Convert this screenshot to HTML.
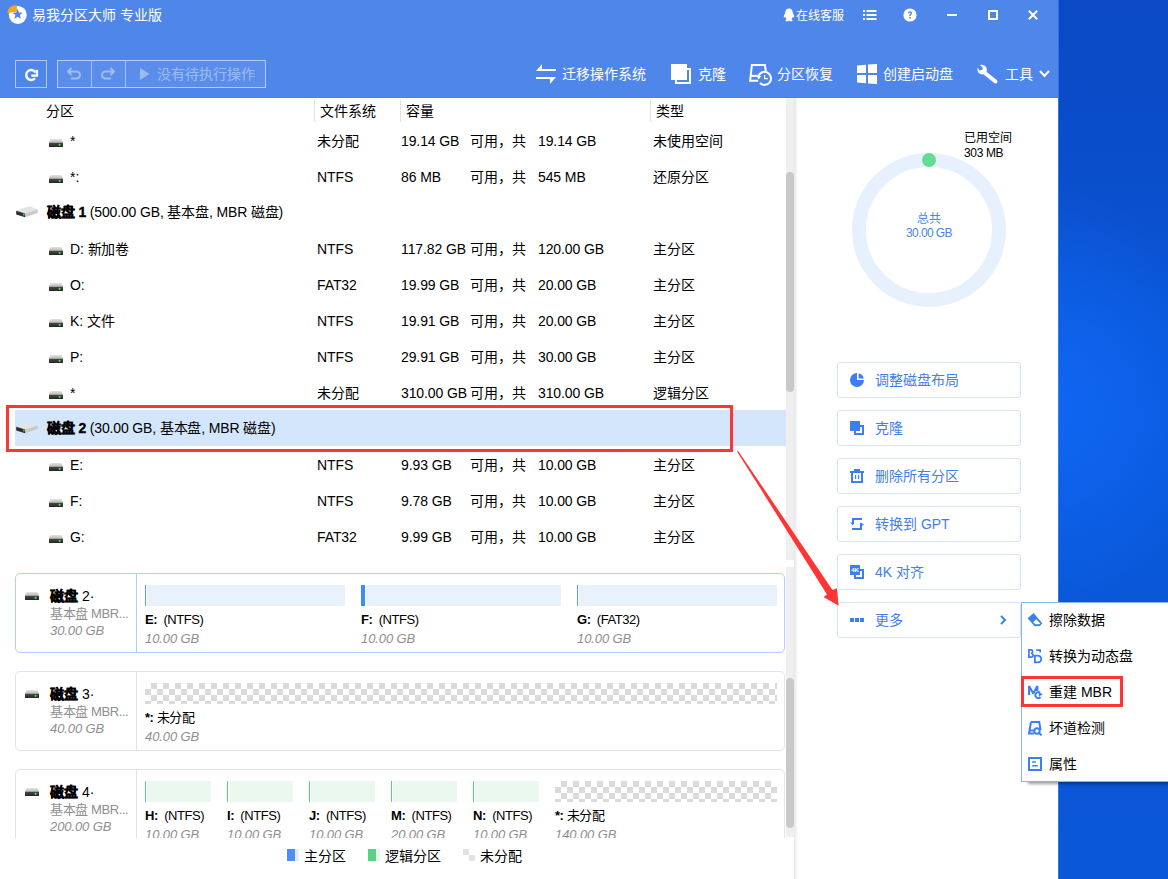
<!DOCTYPE html>
<html lang="zh-CN"><head><meta charset="utf-8">
<style>
*{box-sizing:border-box}
html,body{margin:0;padding:0}
body{width:1168px;height:879px;overflow:hidden;position:relative;font-family:"Liberation Sans",sans-serif;background:#fff}
.a{position:absolute}
.t{position:absolute;white-space:nowrap;line-height:20px;font-size:14px;color:#000}
.w{color:#fff}
svg{position:absolute;overflow:visible}
#desk{left:1058px;top:0;width:110px;height:879px;background:radial-gradient(ellipse 140px 220px at 0 400px,rgba(20,110,255,.55),rgba(20,110,255,0)),linear-gradient(180deg,#0a49c3 0px,#0a4fcd 200px,#0a59dc 330px,#0a5de2 420px,#0a59dc 520px,#0a55d5 650px,#0a57d8 879px)}
#hdr{left:0;top:0;width:1058px;height:98px;background:#4f86ea}
.tb{position:absolute;top:60px;height:28px;border:1px solid rgba(255,255,255,.55)}
.row{position:absolute;left:0;width:786px;height:36px}
.hd{position:absolute;width:14px;height:8px}
.btn{position:absolute;left:837px;width:184px;height:36px;border:1px solid #d3e2fa;border-radius:3px;background:#fff}
.bt{position:absolute;left:37px;top:7px;line-height:20px;font-size:14px;color:#3f80ea;white-space:nowrap}
.card{position:absolute;left:15px;width:770px;height:80px;border:1px solid #dfe5ec;border-radius:5px;background:#fff}
.bar{position:absolute;height:21px}
.pb{background:linear-gradient(90deg,#5b9bff 0,#5b9bff 1px,#fff 1px,#fff 2px,#e8f2fd 2px)}
.lb{background:linear-gradient(90deg,#58cf85 0,#58cf85 1px,#fff 1px,#fff 2px,#eaf8ef 2px)}
.ub{background-color:#fff;background-image:linear-gradient(45deg,#dadada 25%,transparent 25%,transparent 75%,#dadada 75%),linear-gradient(45deg,#dadada 25%,transparent 25%,transparent 75%,#dadada 75%);background-size:12px 12px;background-position:0 0,6px 6px}
.bb{-webkit-text-stroke:0.35px #000}
.pl{position:absolute;font-size:13px;line-height:18px;color:#000;white-space:nowrap}
.pl b{font-weight:bold}
.ps{position:absolute;font-size:13px;line-height:18px;color:#999;font-style:italic;white-space:nowrap}
</style></head><body>
<div id="desk" class="a"></div>
<div class="a" style="left:1058px;top:0;width:1px;height:879px;background:rgba(60,150,230,.6)"></div>

<!-- HEADER -->
<div id="hdr" class="a">
  <div class="a" style="left:0;top:97px;width:1058px;height:1px;background:#4880e6"></div>
  <!-- logo -->
  <svg style="left:0;top:0" width="32" height="30" viewBox="0 0 32 30">
    <circle cx="17.8" cy="14.9" r="9" fill="#fff"/>
    <path d="M7.3 13.1 A9.6 8.6 0 0 1 16.9 4.9 L16.9 11.6 L13.2 12.2 Z" fill="#f8a816"/>
    <path d="M17.6 8.8 L18.95 12.54 L22.9 12.7 L19.79 15.11 L20.9 18.9 L17.6 16.7 L14.3 18.9 L15.41 15.11 L12.3 12.7 L16.25 12.54 Z" fill="#4f86ea"/>
  </svg>
  <div class="t w" style="left:32px;top:5px;font-size:14px">易我分区大师 专业版</div>

  <!-- QQ icon -->
  <svg style="left:783px;top:8px" width="12" height="14" viewBox="0 0 12 14">
    <path d="M6 0.5 C3.3 0.5 2.2 2.6 2.2 5 C1.4 6.2 0.6 7.9 0.9 9.4 C1.2 10 1.8 9.4 2.2 8.8 C2.4 9.8 3 10.6 3.6 11.2 C2.6 11.6 2.2 12.3 2.6 12.9 C3.3 13.6 5 13.3 6 12.7 C7 13.3 8.7 13.6 9.4 12.9 C9.8 12.3 9.4 11.6 8.4 11.2 C9 10.6 9.6 9.8 9.8 8.8 C10.2 9.4 10.8 10 11.1 9.4 C11.4 7.9 10.6 6.2 9.8 5 C9.8 2.6 8.7 0.5 6 0.5 Z" fill="#fff"/>
  </svg>
  <div class="t w" style="left:796px;top:6px;font-size:12px">在线客服</div>
  <!-- list icon -->
  <svg style="left:863px;top:9px" width="14" height="12" viewBox="0 0 14 12">
    <rect x="0" y="1" width="2" height="2" fill="#fff"/><rect x="3.5" y="1" width="10" height="2" fill="#fff"/>
    <rect x="0" y="5" width="2" height="2" fill="#fff"/><rect x="3.5" y="5" width="10" height="2" fill="#fff"/>
    <rect x="0" y="9" width="2" height="2" fill="#fff"/><rect x="3.5" y="9" width="10" height="2" fill="#fff"/>
  </svg>
  <!-- help -->
  <svg style="left:903px;top:8px" width="14" height="14" viewBox="0 0 14 14">
    <circle cx="7" cy="7" r="6.6" fill="#fff"/>
    <path d="M4.9 5.2 C4.9 3.9 5.9 3.2 7 3.2 C8.2 3.2 9.1 3.9 9.1 5 C9.1 6.3 7.7 6.5 7.7 7.7 L7.7 8.1 L6.3 8.1 L6.3 7.5 C6.3 6 7.7 5.9 7.7 5 C7.7 4.6 7.4 4.4 7 4.4 C6.5 4.4 6.2 4.7 6.2 5.2 Z" fill="#4f86ea"/>
    <rect x="6.2" y="9" width="1.6" height="1.6" fill="#4f86ea"/>
  </svg>
  <!-- min max close -->
  <div class="a" style="left:947px;top:14px;width:10px;height:2px;background:#fff"></div>
  <div class="a" style="left:988px;top:10px;width:10px;height:10px;border:2px solid #fff"></div>
  <svg style="left:1028px;top:10px" width="10" height="10" viewBox="0 0 10 10">
    <path d="M0.8 0.8 L9.2 9.2 M9.2 0.8 L0.8 9.2" stroke="#fff" stroke-width="2"/>
  </svg>

  <!-- toolbar left -->
  <div class="tb" style="left:15px;width:32px"></div>
  <svg style="left:0;top:0" width="60" height="98" viewBox="0 0 60 98">
    <path d="M35.03 78.21 A5 5 0 1 1 35.6 72.6" stroke="#fff" stroke-width="2.3" fill="none"/>
    <path d="M37 69.8 L37 75.6 L31.3 75.6" stroke="#fff" stroke-width="2.2" fill="none"/>
  </svg>
  <div class="tb" style="left:57px;width:209px;background:rgba(255,255,255,.07)"></div>
  <div class="a" style="left:91px;top:61px;width:1px;height:26px;background:rgba(255,255,255,.45)"></div>
  <div class="a" style="left:125px;top:61px;width:1px;height:26px;background:rgba(255,255,255,.45)"></div>
  <svg style="left:66px;top:65.5px" width="16" height="14" viewBox="0 0 16 14">
    <path d="M3.5 5.5 L10.5 5.5 A3.5 3.5 0 0 1 10.5 12.5 L5 12.5" stroke="rgba(255,255,255,.42)" stroke-width="1.9" fill="none"/>
    <path d="M5.5 2 L2 5.5 L5.5 9" stroke="rgba(255,255,255,.42)" stroke-width="1.9" fill="none"/>
  </svg>
  <svg style="left:100px;top:65.5px" width="16" height="14" viewBox="0 0 16 14">
    <path d="M12.5 5.5 L5.5 5.5 A3.5 3.5 0 0 0 5.5 12.5 L11 12.5" stroke="rgba(255,255,255,.42)" stroke-width="1.9" fill="none"/>
    <path d="M10.5 2 L14 5.5 L10.5 9" stroke="rgba(255,255,255,.42)" stroke-width="1.9" fill="none"/>
  </svg>
  <svg style="left:140px;top:68px" width="10" height="12" viewBox="0 0 10 12">
    <path d="M0 0 L9.5 6 L0 12 Z" fill="rgba(255,255,255,.4)"/>
  </svg>
  <div class="t" style="left:157px;top:64px;color:rgba(255,255,255,.42)">没有待执行操作</div>

  <!-- toolbar right -->
  <svg style="left:536px;top:64px" width="20" height="20" viewBox="0 0 20 20">
    <path d="M0 7 L6 0 L6 5 L20 5 L20 7 Z" fill="#fff"/>
    <path d="M0 13 L20 13 L14 20 L14 15 L0 15 Z" fill="#fff"/>
  </svg>
  <div class="t w" style="left:562px;top:64px">迁移操作系统</div>
  <svg style="left:671px;top:64px" width="21" height="21" viewBox="0 0 21 21">
    <rect x="0" y="0" width="16" height="16" fill="#fff"/>
    <rect x="5" y="5" width="14" height="14" stroke="#fff" stroke-width="2" fill="none"/>
  </svg>
  <div class="t w" style="left:698px;top:64px">克隆</div>
  <svg style="left:744px;top:60px" width="34" height="30" viewBox="0 0 34 30">
    <path d="M21.8 10.8 L20.9 5.1 L7.9 5.1 L6.1 20.8 L14.2 20.8" stroke="#fff" stroke-width="2" fill="none"/>
    <rect x="7" y="14.8" width="6.8" height="2.1" fill="#fff"/>
    <path d="M15.9 23 A6.5 6.5 0 1 0 14.2 16.7" stroke="#fff" stroke-width="2" fill="none"/>
    <path d="M12.4 16 L17.2 16 L14.8 19.4 Z" fill="#fff"/>
    <path d="M20.6 15 L20.6 18.7 L23.9 18.7" stroke="#fff" stroke-width="1.3" fill="none"/>
  </svg>
  <div class="t w" style="left:777px;top:64px">分区恢复</div>
  <svg style="left:857px;top:64px" width="20" height="20" viewBox="0 0 20 20">
    <path d="M0 1.5 L9 0.8 L9 9 L0 9 Z" fill="#fff"/>
    <path d="M11 0.6 L20 0 L20 9 L11 9 Z" fill="#fff"/>
    <path d="M0 11 L9 11 L9 19.2 L0 18.5 Z" fill="#fff"/>
    <path d="M11 11 L20 11 L20 20 L11 19.4 Z" fill="#fff"/>
  </svg>
  <div class="t w" style="left:883px;top:64px">创建启动盘</div>
  <svg style="left:977px;top:64px" width="22" height="20" viewBox="0 0 22 20">
    <path d="M8.5 9.5 L18.5 17.5" stroke="#fff" stroke-width="4" stroke-linecap="round"/>
    <path d="M3 1 L6 4 L5 6 L2.5 6.5 L0.5 3.5 C0 6 0.8 9 3.5 10 C5.5 10.8 7.5 10.3 9 9 C10 7.5 10.3 5 9 3 C7.8 1.2 5.5 0.5 3 1 Z" fill="#fff"/>
  </svg>
  <div class="t w" style="left:1005px;top:64px">工具</div>
  <svg style="left:1039px;top:70px" width="11" height="8" viewBox="0 0 11 8">
    <path d="M1 1 L5.5 6 L10 1" stroke="#fff" stroke-width="2" fill="none"/>
  </svg>
</div>

<svg width="0" height="0" style="position:absolute;left:0;top:0">
<defs>
<linearGradient id="gtop" x1="0" y1="0" x2="0" y2="1"><stop offset="0" stop-color="#e4e4e4"/><stop offset="1" stop-color="#b9b9b9"/></linearGradient>
<linearGradient id="gfront" x1="0" y1="0" x2="0" y2="1"><stop offset="0" stop-color="#4a4a4a"/><stop offset="1" stop-color="#262626"/></linearGradient>
<symbol id="hdd" viewBox="0 0 14 8">
<path d="M1.6 0 L12.4 0 L14 3.6 L0 3.6 Z" fill="url(#gtop)"/>
<rect x="0" y="3.6" width="14" height="4.4" fill="url(#gfront)"/>
<circle cx="10.6" cy="5.8" r="1.1" fill="#3fe04a"/>
</symbol>
<symbol id="disk" viewBox="0 0 23 12">
<path d="M0.2 4.8 L13.6 0.1 L21.8 3.5 L9.1 7.5 Z" fill="#e3e3e3"/>
<path d="M9.1 7.5 L21.8 3.5 L21.6 7 L9.1 11.3 Z" fill="#c9c9c9"/>
<path d="M0.2 4.8 L9.1 7.5 L9.1 11.3 L0.2 8.6 Z" fill="#2e2e2e"/>
<circle cx="7.8" cy="8.6" r="1.1" fill="#35c43f"/>
</symbol>
</defs></svg>
<!-- LEFT PANEL -->
<div class="t" style="left:46px;top:101px">分区</div>
<div class="a" style="left:314px;top:100px;width:1px;height:22px;background:#e2e2e2"></div>
<div class="t" style="left:320px;top:101px">文件系统</div>
<div class="a" style="left:400px;top:100px;width:1px;height:22px;background:#e2e2e2"></div>
<div class="t" style="left:406px;top:101px">容量</div>
<div class="a" style="left:650px;top:100px;width:1px;height:22px;background:#e2e2e2"></div>
<div class="t" style="left:656px;top:101px">类型</div>
<div class="a" style="left:15px;top:410px;width:771px;height:36px;background:#d4e6fb"></div>
<div class="a" style="left:6px;top:405px;width:727px;height:47px;border:3px solid #fd3535"></div>
<svg style="left:49px;top:139px" width="14" height="8"><use href="#hdd"/></svg>
<div class="t" style="left:70px;top:131px">*</div>
<div class="t" style="left:317px;top:131px">未分配</div>
<div class="t" style="left:401px;top:131px;letter-spacing:-0.1px">19.14 GB</div>
<div class="t" style="left:470px;top:131px">可用，共</div>
<div class="t" style="left:538px;top:131px;letter-spacing:-0.1px">19.14 GB</div>
<div class="t" style="left:653px;top:131px">未使用空间</div>
<svg style="left:49px;top:175px" width="14" height="8"><use href="#hdd"/></svg>
<div class="t" style="left:70px;top:167px">*:</div>
<div class="t" style="left:317px;top:167px;letter-spacing:-0.1px">NTFS</div>
<div class="t" style="left:401px;top:167px;letter-spacing:-0.1px">86 MB</div>
<div class="t" style="left:470px;top:167px">可用，共</div>
<div class="t" style="left:538px;top:167px;letter-spacing:-0.1px">545 MB</div>
<div class="t" style="left:653px;top:167px">还原分区</div>
<svg style="left:16px;top:206px" width="23" height="12"><use href="#disk"/></svg>
<div class="t" style="left:47px;top:202px;letter-spacing:-0.15px"><b class="bb">磁盘 1</b> (500.00 GB, 基本盘, MBR 磁盘)</div>
<svg style="left:49px;top:247px" width="14" height="8"><use href="#hdd"/></svg>
<div class="t" style="left:70px;top:239px;letter-spacing:-0.1px">D: 新加卷</div>
<div class="t" style="left:317px;top:239px;letter-spacing:-0.1px">NTFS</div>
<div class="t" style="left:401px;top:239px;letter-spacing:-0.1px">117.82 GB</div>
<div class="t" style="left:470px;top:239px">可用，共</div>
<div class="t" style="left:538px;top:239px;letter-spacing:-0.1px">120.00 GB</div>
<div class="t" style="left:653px;top:239px">主分区</div>
<svg style="left:49px;top:283px" width="14" height="8"><use href="#hdd"/></svg>
<div class="t" style="left:70px;top:275px;letter-spacing:-0.1px">O:</div>
<div class="t" style="left:317px;top:275px;letter-spacing:-0.1px">FAT32</div>
<div class="t" style="left:401px;top:275px;letter-spacing:-0.1px">19.99 GB</div>
<div class="t" style="left:470px;top:275px">可用，共</div>
<div class="t" style="left:538px;top:275px;letter-spacing:-0.1px">20.00 GB</div>
<div class="t" style="left:653px;top:275px">主分区</div>
<svg style="left:49px;top:319px" width="14" height="8"><use href="#hdd"/></svg>
<div class="t" style="left:70px;top:311px;letter-spacing:-0.1px">K: 文件</div>
<div class="t" style="left:317px;top:311px;letter-spacing:-0.1px">NTFS</div>
<div class="t" style="left:401px;top:311px;letter-spacing:-0.1px">19.91 GB</div>
<div class="t" style="left:470px;top:311px">可用，共</div>
<div class="t" style="left:538px;top:311px;letter-spacing:-0.1px">20.00 GB</div>
<div class="t" style="left:653px;top:311px">主分区</div>
<svg style="left:49px;top:355px" width="14" height="8"><use href="#hdd"/></svg>
<div class="t" style="left:70px;top:347px;letter-spacing:-0.1px">P:</div>
<div class="t" style="left:317px;top:347px;letter-spacing:-0.1px">NTFS</div>
<div class="t" style="left:401px;top:347px;letter-spacing:-0.1px">29.91 GB</div>
<div class="t" style="left:470px;top:347px">可用，共</div>
<div class="t" style="left:538px;top:347px;letter-spacing:-0.1px">30.00 GB</div>
<div class="t" style="left:653px;top:347px">主分区</div>
<svg style="left:49px;top:391px" width="14" height="8"><use href="#hdd"/></svg>
<div class="t" style="left:70px;top:383px">*</div>
<div class="t" style="left:317px;top:383px">未分配</div>
<div class="t" style="left:401px;top:383px;letter-spacing:-0.1px">310.00 GB</div>
<div class="t" style="left:470px;top:383px">可用，共</div>
<div class="t" style="left:538px;top:383px;letter-spacing:-0.1px">310.00 GB</div>
<div class="t" style="left:653px;top:383px">逻辑分区</div>
<svg style="left:16px;top:422px" width="23" height="12"><use href="#disk"/></svg>
<div class="t" style="left:47px;top:418px;letter-spacing:-0.15px"><b class="bb">磁盘 2</b> (30.00 GB, 基本盘, MBR 磁盘)</div>
<svg style="left:49px;top:463px" width="14" height="8"><use href="#hdd"/></svg>
<div class="t" style="left:70px;top:455px;letter-spacing:-0.1px">E:</div>
<div class="t" style="left:317px;top:455px;letter-spacing:-0.1px">NTFS</div>
<div class="t" style="left:401px;top:455px;letter-spacing:-0.1px">9.93 GB</div>
<div class="t" style="left:470px;top:455px">可用，共</div>
<div class="t" style="left:538px;top:455px;letter-spacing:-0.1px">10.00 GB</div>
<div class="t" style="left:653px;top:455px">主分区</div>
<svg style="left:49px;top:499px" width="14" height="8"><use href="#hdd"/></svg>
<div class="t" style="left:70px;top:491px;letter-spacing:-0.1px">F:</div>
<div class="t" style="left:317px;top:491px;letter-spacing:-0.1px">NTFS</div>
<div class="t" style="left:401px;top:491px;letter-spacing:-0.1px">9.78 GB</div>
<div class="t" style="left:470px;top:491px">可用，共</div>
<div class="t" style="left:538px;top:491px;letter-spacing:-0.1px">10.00 GB</div>
<div class="t" style="left:653px;top:491px">主分区</div>
<svg style="left:49px;top:535px" width="14" height="8"><use href="#hdd"/></svg>
<div class="t" style="left:70px;top:527px;letter-spacing:-0.1px">G:</div>
<div class="t" style="left:317px;top:527px;letter-spacing:-0.1px">FAT32</div>
<div class="t" style="left:401px;top:527px;letter-spacing:-0.1px">9.99 GB</div>
<div class="t" style="left:470px;top:527px">可用，共</div>
<div class="t" style="left:538px;top:527px;letter-spacing:-0.1px">10.00 GB</div>
<div class="t" style="left:653px;top:527px">主分区</div>
<!-- list scrollbar -->
<div class="a" style="left:786px;top:98px;width:8px;height:462px;background:#efefef"></div>
<div class="a" style="left:786px;top:172px;width:8px;height:220px;background:#c9c9c9;border-radius:4px"></div>
<div class="a" style="left:794px;top:98px;width:4px;height:781px;background:linear-gradient(90deg,#e6e6e6,#fff)"></div>

<div class="a" style="left:0;top:556px;width:786px;height:282px;overflow:hidden">
<div class="a" style="left:0;top:-556px;width:786px;height:1400px">
<div class="card" style="top:573px;border-color:#b3cdf5"></div>
<div class="a" style="left:136px;top:574px;width:1px;height:78px;background:#b3cdf5"></div>
<svg style="left:25px;top:592px" width="14" height="8"><use href="#hdd"/></svg>
<div class="t" style="left:50px;top:586px;font-size:14px"><b class="bb">磁盘</b> 2·</div>
<div class="t" style="left:50px;top:604px;font-size:13px;color:#8f8f8f;letter-spacing:-0.4px">基本盘 MBR...</div>
<div class="t" style="left:50px;top:621px;font-size:13px;color:#8f8f8f;font-style:italic;letter-spacing:-0.1px">30.00 GB</div>
<div class="bar pb" style="left:145px;top:585px;width:200px"></div>
<div class="t" style="left:145px;top:610px;font-size:13px;letter-spacing:-0.45px"><b>E:</b>&nbsp;&nbsp;(NTFS)</div>
<div class="t" style="left:145px;top:629px;font-size:13px;color:#8f8f8f;font-style:italic;letter-spacing:-0.1px">10.00 GB</div>
<div class="bar pb" style="background:linear-gradient(90deg,#3d8bff 0,#3d8bff 4px,#fff 4px,#fff 5px,#e8f2fd 5px);left:361px;top:585px;width:200px"></div>
<div class="t" style="left:361px;top:610px;font-size:13px;letter-spacing:-0.45px"><b>F:</b>&nbsp;&nbsp;(NTFS)</div>
<div class="t" style="left:361px;top:629px;font-size:13px;color:#8f8f8f;font-style:italic;letter-spacing:-0.1px">10.00 GB</div>
<div class="bar pb" style="left:577px;top:585px;width:200px"></div>
<div class="t" style="left:577px;top:610px;font-size:13px;letter-spacing:-0.45px"><b>G:</b>&nbsp;&nbsp;(FAT32)</div>
<div class="t" style="left:577px;top:629px;font-size:13px;color:#8f8f8f;font-style:italic;letter-spacing:-0.1px">10.00 GB</div>
<div class="card" style="top:671px;border-color:#dfe4eb"></div>
<div class="a" style="left:136px;top:672px;width:1px;height:78px;background:#dfe4eb"></div>
<svg style="left:25px;top:690px" width="14" height="8"><use href="#hdd"/></svg>
<div class="t" style="left:50px;top:684px;font-size:14px"><b class="bb">磁盘</b> 3·</div>
<div class="t" style="left:50px;top:702px;font-size:13px;color:#8f8f8f;letter-spacing:-0.4px">基本盘 MBR...</div>
<div class="t" style="left:50px;top:719px;font-size:13px;color:#8f8f8f;font-style:italic;letter-spacing:-0.1px">40.00 GB</div>
<div class="bar ub" style="left:145px;top:683px;width:632px"></div>
<div class="t" style="left:145px;top:708px;font-size:13px;letter-spacing:-0.45px"><b>*:</b> 未分配</div>
<div class="t" style="left:145px;top:727px;font-size:13px;color:#8f8f8f;font-style:italic;letter-spacing:-0.1px">40.00 GB</div>
<div class="card" style="top:769px;border-color:#dfe4eb"></div>
<div class="a" style="left:136px;top:770px;width:1px;height:78px;background:#dfe4eb"></div>
<svg style="left:25px;top:788px" width="14" height="8"><use href="#hdd"/></svg>
<div class="t" style="left:50px;top:782px;font-size:14px"><b class="bb">磁盘</b> 4·</div>
<div class="t" style="left:50px;top:800px;font-size:13px;color:#8f8f8f;letter-spacing:-0.4px">基本盘 MBR...</div>
<div class="t" style="left:50px;top:817px;font-size:13px;color:#8f8f8f;font-style:italic;letter-spacing:-0.1px">200.00 GB</div>
<div class="bar lb" style="left:145px;top:781px;width:66px"></div>
<div class="t" style="left:145px;top:806px;font-size:13px;letter-spacing:-0.45px"><b>H:</b>&nbsp;&nbsp;(NTFS)</div>
<div class="t" style="left:145px;top:825px;font-size:13px;color:#8f8f8f;font-style:italic;letter-spacing:-0.1px">10.00 GB</div>
<div class="bar lb" style="left:227px;top:781px;width:66px"></div>
<div class="t" style="left:227px;top:806px;font-size:13px;letter-spacing:-0.45px"><b>I:</b>&nbsp;&nbsp;(NTFS)</div>
<div class="t" style="left:227px;top:825px;font-size:13px;color:#8f8f8f;font-style:italic;letter-spacing:-0.1px">10.00 GB</div>
<div class="bar lb" style="left:309px;top:781px;width:66px"></div>
<div class="t" style="left:309px;top:806px;font-size:13px;letter-spacing:-0.45px"><b>J:</b>&nbsp;&nbsp;(NTFS)</div>
<div class="t" style="left:309px;top:825px;font-size:13px;color:#8f8f8f;font-style:italic;letter-spacing:-0.1px">10.00 GB</div>
<div class="bar lb" style="left:391px;top:781px;width:66px"></div>
<div class="t" style="left:391px;top:806px;font-size:13px;letter-spacing:-0.45px"><b>M:</b>&nbsp;&nbsp;(NTFS)</div>
<div class="t" style="left:391px;top:825px;font-size:13px;color:#8f8f8f;font-style:italic;letter-spacing:-0.1px">20.00 GB</div>
<div class="bar lb" style="left:473px;top:781px;width:66px"></div>
<div class="t" style="left:473px;top:806px;font-size:13px;letter-spacing:-0.45px"><b>N:</b>&nbsp;&nbsp;(NTFS)</div>
<div class="t" style="left:473px;top:825px;font-size:13px;color:#8f8f8f;font-style:italic;letter-spacing:-0.1px">10.00 GB</div>
<div class="bar ub" style="left:555px;top:781px;width:222px"></div>
<div class="t" style="left:555px;top:806px;font-size:13px;letter-spacing:-0.45px"><b>*:</b> 未分配</div>
<div class="t" style="left:555px;top:825px;font-size:13px;color:#8f8f8f;font-style:italic;letter-spacing:-0.1px">140.00 GB</div>
</div></div>
<div class="a" style="left:786px;top:567px;width:8px;height:270px;background:#efefef"></div>
<div class="a" style="left:786px;top:678px;width:8px;height:150px;background:#c9c9c9;border-radius:4px"></div>
<!-- legend -->
<div class="a" style="left:287px;top:849px;width:12px;height:12px;background:linear-gradient(90deg,#4d8ef5 0,#4d8ef5 8px,#e3eefc 8px)"></div>
<div class="t" style="left:304px;top:846px">主分区</div>
<div class="a" style="left:368px;top:849px;width:12px;height:12px;background:linear-gradient(90deg,#5ccf86 0,#5ccf86 8px,#e3f6ea 8px)"></div>
<div class="t" style="left:385px;top:846px">逻辑分区</div>
<div class="a" style="left:463px;top:849px;width:12px;height:12px;background:linear-gradient(90deg,#e2e2e2 0,#e2e2e2 6px,#fff 6px);"></div>
<div class="a" style="left:469px;top:855px;width:6px;height:6px;background:#e2e2e2"></div>
<div class="a" style="left:463px;top:855px;width:6px;height:6px;background:#fff"></div>
<div class="t" style="left:480px;top:846px">未分配</div>
<!-- RIGHT PANEL -->
<svg style="left:850px;top:151px" width="158" height="158" viewBox="0 0 158 158">
<circle cx="79" cy="79" r="70" stroke="#e7f1fd" stroke-width="14" fill="none"/>
<circle cx="79" cy="9" r="7" fill="#63dc95"/>
</svg>
<div class="t" style="left:964px;top:128px;font-size:12px">已用空间</div>
<div class="t" style="left:964px;top:143px;font-size:12px;letter-spacing:-0.35px">303 MB</div>
<div class="t" style="left:879px;top:209px;width:100px;text-align:center;font-size:12px;color:#4a86e8">总共</div>
<div class="t" style="left:879px;top:223px;width:100px;text-align:center;font-size:12px;color:#4a86e8;letter-spacing:-0.6px">30.00 GB</div>
<div class="btn" style="top:362px"><svg style="left:12px;top:10px" width="14" height="14" viewBox="0 0 14 14"><path d="M7 0 A7 7 0 1 0 14 7 L7 7 Z" fill="#3a80f2"/><path d="M8.6 0.2 A7 7 0 0 1 13.8 5.4 L8.6 5.4 Z" fill="#3a80f2"/></svg><div class="bt">调整磁盘布局</div></div>
<div class="btn" style="top:410px"><svg style="left:12px;top:10px" width="14" height="14" viewBox="0 0 14 14"><rect x="0" y="0" width="10" height="10" fill="#3a80f2"/><rect x="5" y="5" width="8" height="8" stroke="#3a80f2" stroke-width="2" fill="none"/></svg><div class="bt">克隆</div></div>
<div class="btn" style="top:458px"><svg style="left:12px;top:10px" width="14" height="14" viewBox="0 0 14 14"><rect x="4" y="0" width="6" height="2" fill="#3a80f2"/><rect x="0" y="2" width="14" height="2" fill="#3a80f2"/><path d="M1 4 L13 4 L13 14 L1 14 Z M3 4 L3 12 L11 12 L11 4 Z" fill="#3a80f2" fill-rule="evenodd"/><rect x="5" y="6" width="1.2" height="4" fill="#3a80f2"/><rect x="8" y="6" width="1.2" height="4" fill="#3a80f2"/></svg><div class="bt">删除所有分区</div></div>
<div class="btn" style="top:506px"><svg style="left:12px;top:11px" width="14" height="14" viewBox="0 0 14 14"><path d="M2 1 L12 1 L12 3 L4 3 L4 6" stroke="none" fill="none"/><rect x="2" y="0" width="10" height="2" fill="#3a80f2"/><rect x="2" y="0" width="2" height="6" fill="#3a80f2"/><path d="M0 4.5 L3 7.5 L4 4.5 Z" fill="#3a80f2"/><rect x="2" y="10" width="10" height="2" fill="#3a80f2"/><rect x="10" y="5" width="2" height="7" fill="#3a80f2"/><path d="M10 4.5 L14 6.5 L11 8.5 Z" fill="#3a80f2"/></svg><div class="bt">转换到 GPT</div></div>
<div class="btn" style="top:554px"><svg style="left:12px;top:10px" width="14" height="14" viewBox="0 0 14 14"><rect x="0" y="0" width="10" height="10" fill="#3a80f2"/><rect x="5" y="5" width="8" height="8" stroke="#3a80f2" stroke-width="2" fill="none"/><text x="5" y="7.2" font-size="6" font-weight="bold" fill="#fff" text-anchor="middle" font-family="Liberation Sans">4K</text></svg><div class="bt">4K 对齐</div></div>
<div class="btn" style="top:602px"><svg style="left:12px;top:15px" width="14" height="14" viewBox="0 0 14 14"><rect x="0" y="0" width="4" height="4" fill="#3a80f2"/><rect x="5" y="0" width="4" height="4" fill="#3a80f2"/><rect x="10" y="0" width="4" height="4" fill="#3a80f2"/></svg><div class="bt">更多</div></div>
<svg style="left:1000px;top:615px" width="7" height="10" viewBox="0 0 7 10"><path d="M1 1 L5 5 L1 9" stroke="#3a80f2" stroke-width="2" fill="none"/></svg>
<!-- SUBMENU -->
<div class="a" style="left:1021px;top:602px;width:160px;height:180px;background:#fff;border:1px solid #86b5f1;box-shadow:6px 3px 3px -1px rgba(0,0,0,.38)"></div>
<svg style="left:1028px;top:613px" width="15" height="14" viewBox="0 0 15 14">
<path d="M-0.4 5.3 L5.6 0 L14.2 10.2 L11.9 12.9 L6.6 13.2 Z M5.2 9.2 L8.2 6.2 L12.2 10.5 L11.2 11.3 L7.2 11.3 Z" fill="#3a80f2" fill-rule="evenodd"/>
</svg>
<div class="t" style="left:1049px;top:610px">擦除数据</div>
<svg style="left:1028px;top:649px" width="15" height="15" viewBox="0 0 15 15">
<path d="M0.9 0.9 L3 0.9 Q4.6 0.9 4.6 2.6 Q4.6 4.1 3.1 4.3 Q5.1 4.4 5.1 6.3 Q5.1 8.2 3.2 8.2 L0.9 8.2 Z" stroke="#3a80f2" stroke-width="1.7" fill="none"/>
<path d="M6.9 6.7 L9.2 6.7 Q13.2 6.7 13.2 10.2 Q13.2 13.3 9.2 13.3 L6.9 13.3 Z" stroke="#3a80f2" stroke-width="1.8" fill="none"/>
<path d="M8.2 1.1 L12.2 1.1 L12.2 3.6" stroke="#3a80f2" stroke-width="1.6" fill="none"/>
</svg>
<div class="t" style="left:1049px;top:646px">转换为动态盘</div>
<svg style="left:1028px;top:685px" width="16" height="15" viewBox="0 0 16 15">
<path d="M1.1 10 L1.1 0.9 L5.3 8.4 L9.4 0.9 L9.4 6" stroke="#3a80f2" stroke-width="2.1" fill="none" stroke-linejoin="bevel"/>
<path d="M12.5 12 A2.9 2.9 0 1 1 11.8 7.6" stroke="#3a80f2" stroke-width="1.9" fill="none"/>
<path d="M10.6 6.3 L14.6 9.4 L11 11.6 Z" fill="#3a80f2"/>
</svg>
<div class="t" style="left:1049px;top:682px">重建 MBR</div>
<div class="a" style="left:1021px;top:676px;width:102px;height:31px;border:3px solid #fd3535"></div>
<svg style="left:1028px;top:721px" width="15" height="15" viewBox="0 0 15 15">
<path d="M3 1 L11.2 1 L12.6 9" stroke="#3a80f2" stroke-width="2" fill="none"/>
<path d="M3 1 L1 12.5 L6 12.5" stroke="#3a80f2" stroke-width="2" fill="none"/>
<rect x="1.5" y="8.6" width="4.5" height="1.8" fill="#3a80f2"/>
<circle cx="9" cy="10" r="2.7" stroke="#3a80f2" stroke-width="1.9" fill="#fff"/>
<path d="M10.9 12 L13.6 14.2" stroke="#3a80f2" stroke-width="2"/>
</svg>
<div class="t" style="left:1049px;top:718px">坏道检测</div>
<svg style="left:1028px;top:757px" width="14" height="14" viewBox="0 0 14 14">
<rect x="1" y="1" width="12" height="12" stroke="#3a80f2" stroke-width="2" fill="none"/>
<rect x="4.2" y="4.3" width="3.6" height="1.5" fill="#3a80f2"/>
<rect x="4.2" y="8" width="5.6" height="1.5" fill="#3a80f2"/>
</svg>
<div class="t" style="left:1049px;top:754px">属性</div>
<!-- ARROW -->
<svg style="left:0;top:0" width="1168" height="879" viewBox="0 0 1168 879">
<path d="M737 451.5 L738.2 451 L832.5 590 L837 588.2 L838.6 605.8 L823.5 597 L827 594.4 Z" fill="#fd3535"/>
</svg>
</body></html>
